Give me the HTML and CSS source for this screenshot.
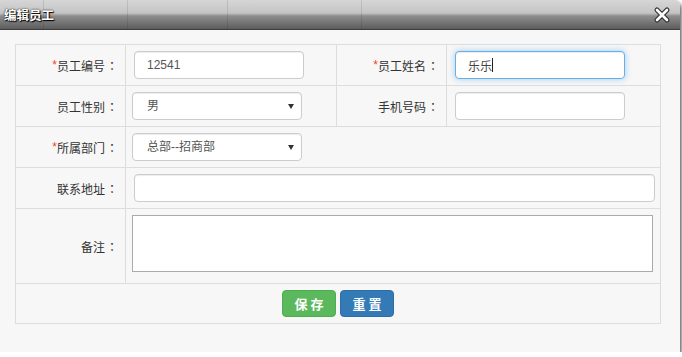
FILE: index.html
```html
<!DOCTYPE html>
<html lang="zh-CN">
<head>
  <meta charset="UTF-8">
  <title>编辑员工</title>
  <link rel="stylesheet" href="styles.css">
</head>
<body>

<div class="dialog">
  <div class="dialog-title">
    <span class="title-text">编辑员工</span>
    <svg class="close-btn" width="18" height="18" viewBox="0 0 18 18">
      <path d="M4 4 L14 14 M14 4 L4 14" stroke="#333" stroke-width="5" stroke-linecap="round"/>
      <path d="M4 4 L14 14 M14 4 L4 14" stroke="#fff" stroke-width="2.6" stroke-linecap="round"/>
    </svg>
  </div>

  <div class="dialog-body">
    <form class="form-grid">
      <div class="cell label"><em>*</em>员工编号<span class="colon">：</span></div>
      <div class="cell value"><input class="field" type="text" value="12541"></div>
      <div class="cell label"><em>*</em>员工姓名<span class="colon">：</span></div>
      <div class="cell value">
        <div class="focus-wrap">
          <input class="field focused" type="text" value="乐乐">
          <span class="caret"></span>
        </div>
      </div>

      <div class="cell label">员工性别<span class="colon">：</span></div>
      <div class="cell value-sel">
        <div class="select-wrap">
          <select class="field select"><option>男</option><option>女</option></select>
        </div>
      </div>
      <div class="cell label">手机号码<span class="colon">：</span></div>
      <div class="cell value"><input class="field" type="text"></div>

      <div class="cell label"><em>*</em>所属部门<span class="colon">：</span></div>
      <div class="cell value-sel span3">
        <div class="select-wrap">
          <select class="field select"><option>总部--招商部</option></select>
        </div>
      </div>

      <div class="cell label">联系地址<span class="colon">：</span></div>
      <div class="cell value span3"><input class="field wide" type="text"></div>

      <div class="cell label">备注<span class="colon">：</span></div>
      <div class="cell value-sel span3 top"><textarea class="remark"></textarea></div>

      <div class="cell span4 actions">
        <button type="button" class="btn btn-save">保存</button>
        <button type="button" class="btn btn-reset">重置</button>
      </div>
    </form>
  </div>
</div>

</body>
</html>
```

FILE: styles.css
```css
/* General */
body {
  margin: 0;
  background-color: #fff;
  font-family: "Liberation Sans", "Noto Sans CJK SC", sans-serif;
  font-size: 12px;
  color: #333;
}

/* Dialog window */
.dialog {
  width: 680px;
  height: 352px;
  background-color: #f7f7f7;
  border-radius: 0 5px 0 0;
  box-shadow: 1px 3px 4px rgba(0, 0, 0, 0.8);
  display: flex;
  flex-direction: column;
}

.dialog-title {
  height: 30px;
  box-sizing: border-box;
  border-bottom: 1px solid #3e3e3e;
  border-radius: 0 5px 0 0;
  display: flex;
  align-items: center;
  justify-content: space-between;
  padding: 0 9px 0 4px;
  /* faint lines of the page behind, then the glossy bar */
  background:
    linear-gradient(to right, transparent 43px, rgba(0,0,0,0.1) 43px, rgba(0,0,0,0.1) 44px, transparent 44px),
    linear-gradient(to right, transparent 127px, rgba(0,0,0,0.1) 127px, rgba(0,0,0,0.1) 128px, transparent 128px),
    linear-gradient(to right, transparent 227px, rgba(0,0,0,0.1) 227px, rgba(0,0,0,0.1) 228px, transparent 228px),
    linear-gradient(to right, transparent 361px, rgba(0,0,0,0.1) 361px, rgba(0,0,0,0.1) 362px, transparent 362px),
    linear-gradient(#d6d6d6 0%, #c4c4c4 45%, #8e8e8e 55%, #5c5c5c 100%);
}

.title-text {
  color: #fff;
  font-weight: bold;
  font-size: 12.5px;
  text-shadow: 0 0 2px #000, 1px 1px 1px #000;
}

.close-btn {
  display: block;
}

.dialog-body {
  flex: 1;
  padding: 14px 0 0 15px;
}

/* Form grid */
.form-grid {
  display: grid;
  grid-template-columns: 110px 211px 110px 214px;
  grid-template-rows: 41px 41px 41px 41px 75px 40px;
  width: fit-content;
  margin: 0;
  border-left: 1px solid #ddd;
  border-top: 1px solid #ddd;
}

.cell {
  box-sizing: border-box;
  border-right: 1px solid #ddd;
  border-bottom: 1px solid #ddd;
  display: flex;
  align-items: center;
}

.span3 { grid-column: span 3; }
.span4 { grid-column: span 4; }

.label {
  justify-content: flex-end;
  padding-right: 7px;
  color: #333;
}

.label em {
  font-style: normal;
  color: #f2442a;
}

/* centred full-width colon */
.colon {
  font-family: "Noto Sans CJK TC", sans-serif;
  margin-left: 1px;
}

.value { padding-left: 8px; }
.value-sel { padding-left: 6px; }

.top {
  align-items: flex-start;
  padding-top: 6px;
}

/* Inputs */
.field {
  box-sizing: border-box;
  width: 170px;
  height: 28px;
  padding: 0 12px;
  border: 1px solid #ccc;
  border-radius: 4px;
  background-color: #fff;
  box-shadow: inset 0 1px 1px rgba(0, 0, 0, 0.075);
  font-family: "Liberation Sans", "Noto Sans CJK SC", sans-serif;
  font-size: 12px;
  color: #555;
  outline: none;
}

.field.wide { width: 521px; }

.field.focused {
  border-color: #66afe9;
  box-shadow: inset 0 1px 1px rgba(0, 0, 0, 0.075), 0 0 6px rgba(102, 175, 233, 0.6);
  color: #444;
}

.focus-wrap {
  position: relative;
}

.caret {
  position: absolute;
  left: 37px;
  top: 7px;
  width: 1px;
  height: 14px;
  background-color: #222;
}

/* Select */
.select-wrap {
  position: relative;
}

.select {
  appearance: none;
  -webkit-appearance: none;
  padding-left: 14px;
}

.select-wrap::after {
  content: "";
  position: absolute;
  right: 8px;
  top: 12px;
  border-left: 3px solid transparent;
  border-right: 3px solid transparent;
  border-top: 5px solid #333;
}

/* Textarea */
.remark {
  box-sizing: border-box;
  width: 521px;
  height: 57px;
  margin: 0;
  border: 1px solid #aaa;
  background-color: #fff;
  resize: none;
  font-family: "Liberation Sans", "Noto Sans CJK SC", sans-serif;
}

/* Buttons */
.actions {
  justify-content: center;
  gap: 4px;
}

.btn {
  width: 54px;
  height: 27px;
  padding: 0 0 0 3px;
  border-radius: 4px;
  border: 1px solid transparent;
  color: #fff;
  font-family: "Liberation Sans", "Noto Sans CJK SC", sans-serif;
  font-size: 13px;
  font-weight: bold;
  letter-spacing: 3px;
  cursor: pointer;
}

.btn-save {
  background-color: #5cb85c;
  border-color: #4cae4c;
}

.btn-reset {
  background-color: #337ab7;
  border-color: #2e6da4;
}
```
